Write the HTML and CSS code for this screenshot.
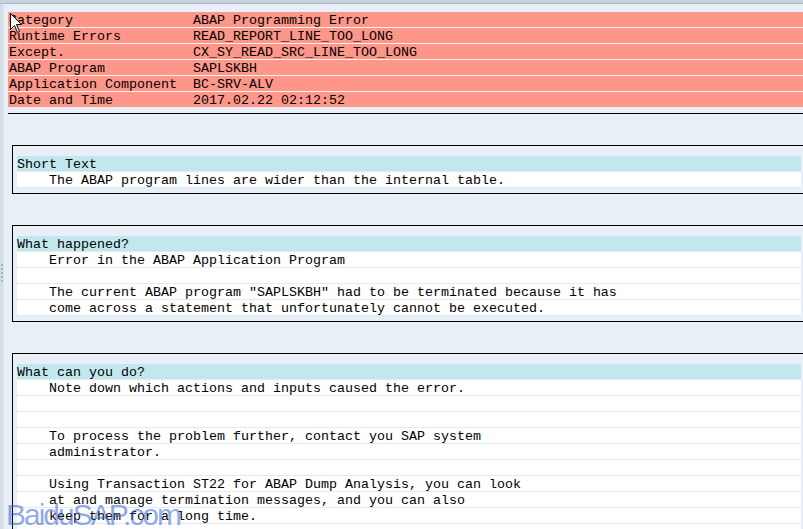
FILE: index.html
```html
<!DOCTYPE html>
<html lang="en">
  <head>
    <meta charset="UTF-8" />
    <title>ABAP Runtime Error</title>
    <link rel="stylesheet" href="styles.css">
  </head>
  <body>
    <div class="topbar"></div>
    <div class="frame">
      <div class="sash"><span class="grip"></span></div>
      <div class="page">
        <div class="summary">
          <div class="sum-row"><span>Category</span><span>ABAP Programming Error</span></div>
          <div class="sum-row"><span>Runtime Errors</span><span>READ_REPORT_LINE_TOO_LONG</span></div>
          <div class="sum-row"><span>Except.</span><span>CX_SY_READ_SRC_LINE_TOO_LONG</span></div>
          <div class="sum-row"><span>ABAP Program</span><span>SAPLSKBH</span></div>
          <div class="sum-row"><span>Application Component</span><span>BC-SRV-ALV</span></div>
          <div class="sum-row"><span>Date and Time</span><span>2017.02.22 02:12:52</span></div>
        </div>
        <div class="rule"></div>

        <div class="block">
          <div class="line head">Short Text</div>
          <div class="line ind">The ABAP program lines are wider than the internal table.</div>
        </div>

        <div class="block">
          <div class="line head">What happened?</div>
          <div class="line ind">Error in the ABAP Application Program</div>
          <div class="line ind"></div>
          <div class="line ind">The current ABAP program "SAPLSKBH" had to be terminated because it has</div>
          <div class="line ind">come across a statement that unfortunately cannot be executed.</div>
        </div>

        <div class="block">
          <div class="line head">What can you do?</div>
          <div class="line ind">Note down which actions and inputs caused the error.</div>
          <div class="line ind"></div>
          <div class="line ind"></div>
          <div class="line ind">To process the problem further, contact you SAP system</div>
          <div class="line ind">administrator.</div>
          <div class="line ind"></div>
          <div class="line ind">Using Transaction ST22 for ABAP Dump Analysis, you can look</div>
          <div class="line ind">at and manage termination messages, and you can also</div>
          <div class="line ind">keep them for a long time.</div>
          <div class="line ind"></div>
        </div>
      </div>
    </div>

    <div class="watermark">BaiduSAP.com</div>

    <!-- mouse pointer over the first row -->
    <svg class="cursor" width="13" height="21" viewBox="0 0 13 21">
      <path d="M0.5 0.5 L0.5 16.5 L4.5 12.5 L7.5 19.5 L9.5 18.5 L6.5 11.5 L11.5 11.5 Z" fill="#fff" stroke="#000" stroke-width="1" />
    </svg>
  </body>
</html>
```

FILE: styles.css
```css
body {
  margin: 0;
  height: 529px;
  overflow: hidden;
  background-color: #e9eff6;
  font-family: "Liberation Mono", "DejaVu Sans Mono", monospace;
  font-size: 13.33px;
  color: #000;
  position: relative;
}
.topbar {
  height: 3px;
  background-color: #c8d3de;
  border-bottom: 1px solid #a9b8c5;
}
.frame {
  display: flex;
  height: 525px;
}
.sash {
  width: 3px;
  flex-shrink: 0;
  background-color: #d4dee8;
  border-right: 1px solid #dfe6ee;
  display: flex;
  flex-direction: column;
  justify-content: center;
  align-items: center;
}
.grip {
  width: 0;
  height: 18px;
  border-left: 2px dotted #a3b0bd;
  margin-top: 12px;
}
.page {
  width: 800px;
  flex-shrink: 0;
  padding: 8px 0 0 4px;
}
.summary {
  background-color: #ff968a;
}
.sum-row {
  display: grid;
  grid-template-columns: 184px auto;
  height: 15px;
  line-height: 18px;
  padding-left: 1px;
  white-space: pre;
}
.sum-row + .sum-row {
  border-top: 1px solid #fff1ee;
}
.rule {
  margin: 6px 0 31px;
  border-top: 1px solid #000;
}
.block {
  width: 794px;
  box-sizing: border-box;
  margin: 0 0 31px 4px;
  padding: 10px 4px 5px;
  border: 1px solid #000;
}
.line {
  height: 15px;
  line-height: 18px;
  background-color: #fff;
  border-bottom: 1px solid #e4eaf1;
  white-space: pre;
}
.head {
  background-color: #c1e8ec;
}
.ind {
  padding-left: 32px;
}
.watermark {
  position: absolute;
  left: 6px;
  top: 498px;
  font-family: "Liberation Sans", Arial, sans-serif;
  font-size: 30px;
  letter-spacing: -2px;
  color: rgba(50, 95, 210, 0.55);
}
.cursor {
  position: absolute;
  left: 10px;
  top: 13px;
}
```
